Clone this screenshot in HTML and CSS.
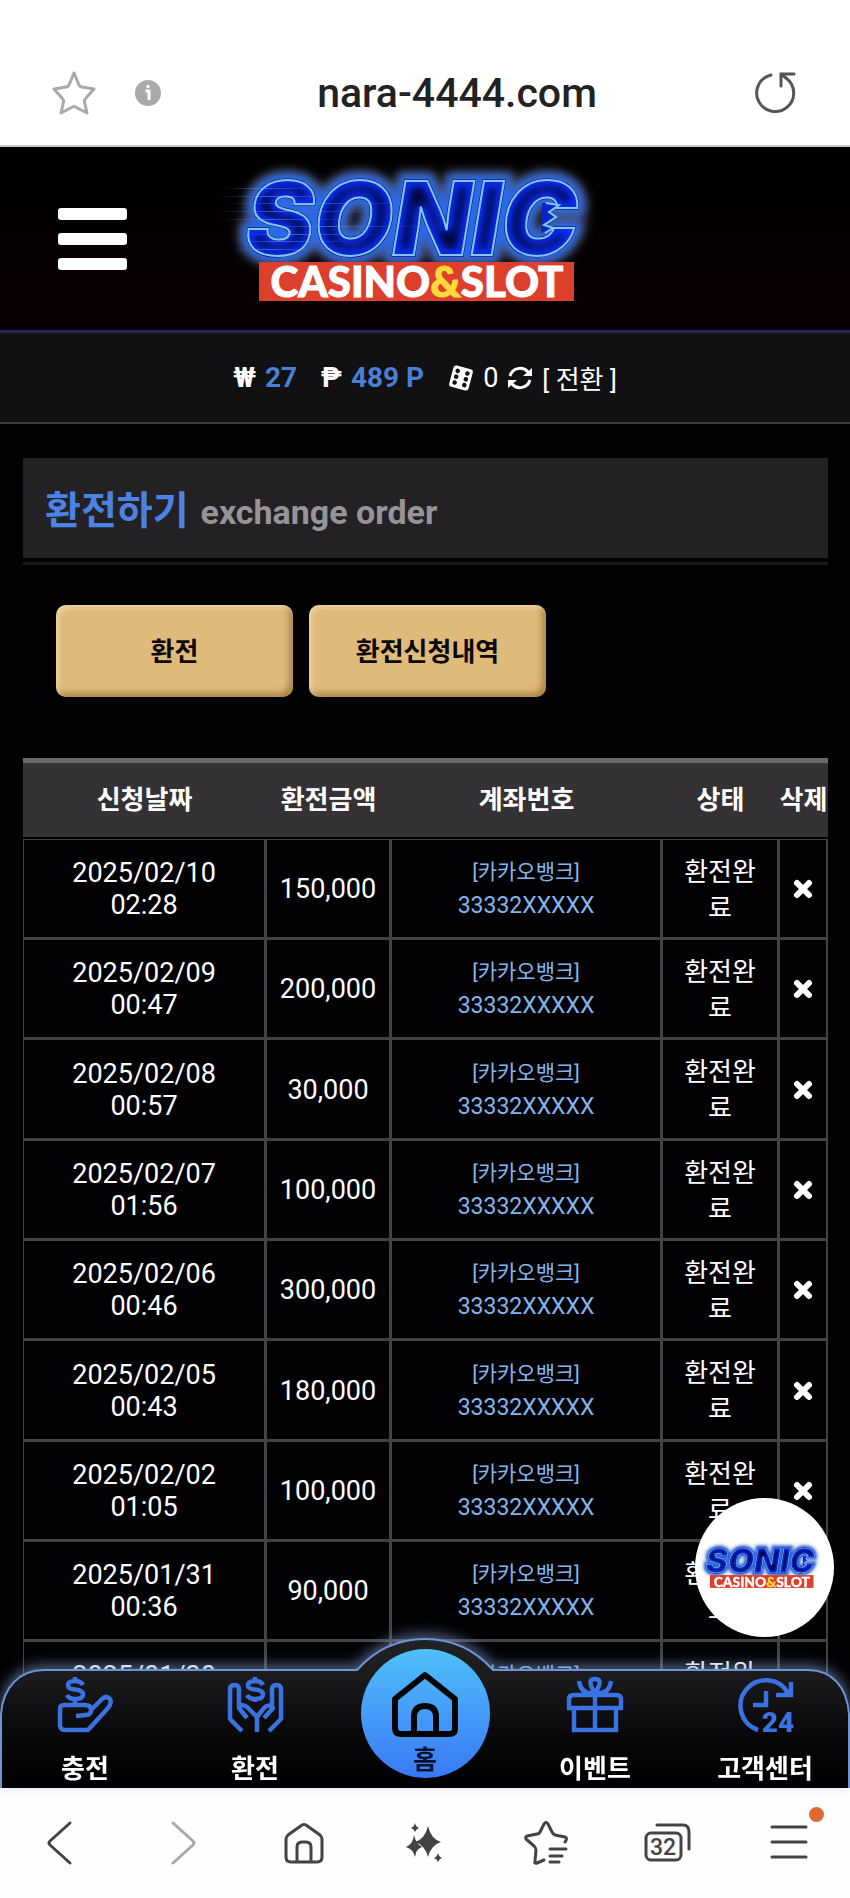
FILE: index.html
```html
<!DOCTYPE html>
<html lang="ko">
<head>
<meta charset="utf-8">
<meta name="viewport" content="width=device-width, initial-scale=1">
<title>환전하기</title>
<link rel="stylesheet" href="styles.css">
</head>
<body>

<!-- Shared logo -->
<svg class="defs" aria-hidden="true">
  <defs>
    <filter id="halo" x="-20%" y="-40%" width="140%" height="180%"><feGaussianBlur stdDeviation="6"/></filter>
    <filter id="soft" x="-20%" y="-40%" width="140%" height="180%"><feGaussianBlur stdDeviation="4"/></filter>
    <linearGradient id="speed" x1="0" x2="1"><stop offset="0" stop-color="#3560c8" stop-opacity="0"/><stop offset=".4" stop-color="#4c74d8" stop-opacity=".8"/><stop offset="1" stop-color="#3b62e0" stop-opacity=".1"/></linearGradient>
    <clipPath id="word-clip"><text x="46" y="96" class="logo-word">SONIC</text></clipPath>
    <symbol id="logo" viewBox="35 15 380 130" overflow="visible">
      <text x="46" y="96" class="logo-word logo-halo" filter="url(#halo)">SONIC</text>
      <text x="46" y="96" class="logo-word logo-rim" filter="url(#soft)">SONIC</text>
      <text x="46" y="96" class="logo-word logo-fill">SONIC</text>
      <g clip-path="url(#word-clip)"><text x="46" y="96" class="logo-word logo-inner" filter="url(#soft)">SONIC</text></g>
      <g fill="url(#speed)">
        <rect x="24" y="29" width="90" height="1"/><rect x="20" y="37" width="120" height="1"/><rect x="24" y="44" width="180" height="1"/>
        <rect x="18" y="52" width="150" height="1"/><rect x="22" y="60" width="120" height="1"/><rect x="60" y="67" width="160" height="1"/>
        <rect x="38" y="75" width="140" height="1"/><rect x="30" y="82" width="120" height="1"/><rect x="32" y="90" width="90" height="1"/>
      </g>
      <text x="46" y="96" class="logo-word logo-line">SONIC</text>
      <path d="M342 44 359 46 349 53 356 58 344 66 353 69 341 74Z" fill="#0a24c8"/>
      <path d="M346 44 359 46 349 53 356 58 344 66 353 69 345 74" fill="none" stroke="#7fc8ff" stroke-width="2"/>
      <rect x="59" y="103" width="315" height="39" fill="#dc3f2c"/>
      <text x="217" y="138" class="logo-sub">CASINO<tspan class="logo-amp">&amp;</tspan>SLOT</text>
    </symbol>
  </defs>
</svg>

<div class="address-bar">
  <div class="address-side">
    <button class="plain" aria-label="즐겨찾기"><svg width="44" height="44" viewBox="0 0 44 44" fill="none" stroke="#a9a9a9" stroke-width="3" stroke-linejoin="round"><path d="M22 2 27 14 Q28 16 30 16 L42 18 34 27 Q32 29 32.500 31 L35 42 23.500 36 Q22 35 20.500 36 L9 42 11.500 31 Q12 29 10 27 L2 18 14 16 Q16 16 17 14Z"/></svg></button>
    <button class="plain" aria-label="사이트 정보"><svg width="26" height="26" viewBox="0 0 26 26"><circle cx="13" cy="13" r="13" fill="#a9a9a9"/><path d="M10.500 11H14V20M13 5V8" fill="none" stroke="#fff" stroke-width="3"/></svg></button>
  </div>
  <div class="address">nara-4444.com</div>
  <button class="plain reload" aria-label="새로고침"><svg width="44" height="44" viewBox="0 0 44 44" fill="none" stroke="#555" stroke-width="3" stroke-linecap="round"><path d="M17 4A18.500 18.500 0 1 0 32 7"/><path d="M40 3H27V15M27 3 32 7"/></svg></button>
</div>

<header class="site-header">
  <button class="plain burger" aria-label="메뉴"><span></span><span></span><span></span></button>
  <a class="brand" href="#" aria-label="SONIC CASINO&amp;SLOT"><svg width="380" height="130"><use href="#logo"/></svg></a>
</header>

<div class="balance">
  <span class="pair"><span class="sign">₩</span><b>27</b></span>
  <span class="pair"><span class="sign">₱</span><b>489 P</b></span>
  <span class="pair">
    <svg width="26" height="26" viewBox="0 0 26 26"><g transform="rotate(15 13 13)"><rect x="3" y="2" width="20" height="22" rx="3" fill="#fff"/><g fill="#111013"><circle cx="8" cy="7" r="2.300"/><circle cx="8" cy="13" r="2.300"/><circle cx="8" cy="19" r="2.300"/><circle cx="18" cy="7" r="2.300"/><circle cx="18" cy="13" r="2.300"/><circle cx="18" cy="19" r="2.300"/></g></g></svg>
    <span>0</span>
    <svg width="26" height="26" viewBox="0 0 26 26" fill="none" stroke="#fff" stroke-width="3"><path d="M3 11A10.500 10.500 0 0 1 21 7M23 15A10.500 10.500 0 0 1 5 19"/><path d="M25 3V11H16ZM1 23V15H10Z" fill="#fff" stroke="none"/></svg>
    <a class="convert" href="#">[ 전환 ]</a>
  </span>
</div>

<main class="content">
  <h1 class="title">환전하기 <small>exchange order</small></h1>
  <div class="actions">
    <button class="gold">환전</button>
    <button class="gold">환전신청내역</button>
  </div>

  <table class="orders">
    <colgroup><col class="c-date"><col class="c-amount"><col class="c-account"><col class="c-state"><col class="c-delete"></colgroup>
    <thead>
      <tr><th>신청날짜</th><th>환전금액</th><th>계좌번호</th><th>상태</th><th>삭제</th></tr>
    </thead>
    <tbody>
      <tr><td>2025/02/10<br>02:28</td><td>150,000</td><td class="account"><span>[카카오뱅크]</span>33332XXXXX</td><td class="state">환전완료</td><td><button class="plain" aria-label="삭제"><svg class="x" viewBox="0 0 20 20"><path d="M4 4 16 16M16 4 4 16"/></svg></button></td></tr>
      <tr><td>2025/02/09<br>00:47</td><td>200,000</td><td class="account"><span>[카카오뱅크]</span>33332XXXXX</td><td class="state">환전완료</td><td><button class="plain" aria-label="삭제"><svg class="x" viewBox="0 0 20 20"><path d="M4 4 16 16M16 4 4 16"/></svg></button></td></tr>
      <tr><td>2025/02/08<br>00:57</td><td>30,000</td><td class="account"><span>[카카오뱅크]</span>33332XXXXX</td><td class="state">환전완료</td><td><button class="plain" aria-label="삭제"><svg class="x" viewBox="0 0 20 20"><path d="M4 4 16 16M16 4 4 16"/></svg></button></td></tr>
      <tr><td>2025/02/07<br>01:56</td><td>100,000</td><td class="account"><span>[카카오뱅크]</span>33332XXXXX</td><td class="state">환전완료</td><td><button class="plain" aria-label="삭제"><svg class="x" viewBox="0 0 20 20"><path d="M4 4 16 16M16 4 4 16"/></svg></button></td></tr>
      <tr><td>2025/02/06<br>00:46</td><td>300,000</td><td class="account"><span>[카카오뱅크]</span>33332XXXXX</td><td class="state">환전완료</td><td><button class="plain" aria-label="삭제"><svg class="x" viewBox="0 0 20 20"><path d="M4 4 16 16M16 4 4 16"/></svg></button></td></tr>
      <tr><td>2025/02/05<br>00:43</td><td>180,000</td><td class="account"><span>[카카오뱅크]</span>33332XXXXX</td><td class="state">환전완료</td><td><button class="plain" aria-label="삭제"><svg class="x" viewBox="0 0 20 20"><path d="M4 4 16 16M16 4 4 16"/></svg></button></td></tr>
      <tr><td>2025/02/02<br>01:05</td><td>100,000</td><td class="account"><span>[카카오뱅크]</span>33332XXXXX</td><td class="state">환전완료</td><td><button class="plain" aria-label="삭제"><svg class="x" viewBox="0 0 20 20"><path d="M4 4 16 16M16 4 4 16"/></svg></button></td></tr>
      <tr><td>2025/01/31<br>00:36</td><td>90,000</td><td class="account"><span>[카카오뱅크]</span>33332XXXXX</td><td class="state">환전완료</td><td></td></tr>
      <tr><td>2025/01/30<br>&nbsp;</td><td></td><td class="account"><span>[카카오뱅크]</span>&nbsp;</td><td class="state">환전완료</td><td></td></tr>
    </tbody>
  </table>
</main>

<a class="floating" href="#" aria-label="SONIC"><svg width="125" height="43"><use href="#logo"/></svg></a>

<footer class="dock">
  <nav class="site-nav">
    <svg class="nav-shape" viewBox="0 0 850 149" preserveAspectRatio="none" aria-hidden="true">
      <defs><linearGradient id="nav-bg" x1="0" y1="0" x2="0" y2="1"><stop offset="0" stop-color="#222326"/><stop offset=".25" stop-color="#1b1b1d"/><stop offset=".6" stop-color="#0a090c"/><stop offset="1" stop-color="#000"/></linearGradient></defs>
      <path d="M1 150V76C3 49 20 32 44 32H357C374 13 395 1 425 1S476 13 493 32H808C832 32 847 49 849 76V150" fill="url(#nav-bg)" stroke="#6d93d8" stroke-width="2"/>
    </svg>
    <a class="nav-item" href="#">
      <svg width="56" height="56" viewBox="0 0 56 56" fill="none" stroke="#3a72e2" stroke-width="4.500" stroke-linejoin="round"><path d="M18 23V28M32 53H8Q3 53 3 48V32Q3 28 7 28H28Q34 28 34 33Q34 38 29 38L19 39M33 34 45 22Q49 18 53 22Q55 26 51 31L31 53"/><path d="M26 8Q24 4 18 4Q11 4 11 8.500Q11 12 18 12.500Q26 13 26 17.500Q26 22 18 22Q12 22 10 18M18 0V4"/></svg>
      <span>충전</span>
    </a>
    <a class="nav-item" href="#">
      <svg width="56" height="56" viewBox="0 0 56 56" fill="none" stroke="#3a72e2" stroke-width="4.500" stroke-linejoin="round"><path d="M15 54 3 42V13Q3 8 7.500 8T12 13V31L20 41M12 31Q14 26 20 30L30 40V55M30 40 37 31Q42 26 46 31L37 41M45 31V13Q45 8 49.500 8T54 13V42L42 54"/><path d="M36 8Q34 4 28 4Q21 4 21 8.500Q21 12 28 12.500Q36 13 36 17.500Q36 22 28 22Q22 22 20 18M28 0V4M28 22V25"/></svg>
      <span>환전</span>
    </a>
    <a class="nav-item home" href="#">
      <svg width="66" height="66" viewBox="0 0 66 66" fill="none" stroke="#050505" stroke-width="6" stroke-linejoin="round"><path d="M3 27 33 3 63 27V57Q63 62 57 62H9Q3 62 3 56ZM22 62V45Q22 34 33 34T44 45V62"/></svg>
      <span>홈</span>
    </a>
    <a class="nav-item" href="#">
      <svg width="56" height="56" viewBox="0 0 56 56" fill="none" stroke="#3a72e2" stroke-width="4.500"><path d="M2 32V22Q2 18 7 18H49Q54 18 54 22V32M0 31H56M7 32V53H49V32M28 18V53M28 16C20 4 24 2 28 2S36 4 28 16M28 16Q14 18 12 4M28 16Q42 18 44 4"/></svg>
      <span>이벤트</span>
    </a>
    <a class="nav-item" href="#">
      <svg width="56" height="56" viewBox="0 0 56 56" fill="none" stroke="#3a72e2" stroke-width="4.500"><path d="M21 53A25.500 25.500 0 1 1 51 16M54 5V18H39M29 14V28H16"/><text x="41" y="55" class="hours">24</text></svg>
      <span>고객센터</span>
    </a>
  </nav>

  <div class="toolbar">
    <button class="plain" aria-label="뒤로"><svg width="44" height="44" viewBox="0 0 44 44"><path d="M31 2 11 20Q9 22 11 24L31 42"/></svg></button>
    <button class="plain faded" aria-label="앞으로"><svg width="44" height="44" viewBox="0 0 44 44"><path d="M13 2 33 20Q35 22 33 24L13 42"/></svg></button>
    <button class="plain" aria-label="홈"><svg width="44" height="44" viewBox="0 0 44 44"><path d="M4 18Q4 16 6 14L20 4Q22 3 24 4L38 14Q40 16 40 18V36Q40 41 35 41H9Q4 41 4 36ZM15 41V26Q15 21 20 21H24Q29 21 29 26V41"/></svg></button>
    <button class="plain" aria-label="AI"><svg width="44" height="44" viewBox="0 0 44 44"><path class="solid" d="M25 5Q28 18 38 21Q28 24 25 36Q22 24 12 21Q22 18 25 5ZM11 14Q13 23 19 26Q13 28 12 36Q10 28 3 26Q10 23 11 14ZM12 2Q13 6 16 7Q13 8 12 11Q11 8 8 7Q11 6 12 2ZM35 32Q36 36 39 37Q36 38 35 41Q34 38 31 37Q34 36 35 32Z"/></svg></button>
    <button class="plain" aria-label="북마크"><svg width="44" height="44" viewBox="0 0 44 44"><path d="M20 39 13 42Q10 43 11 40L12 29Q12 27 10 25L2 18Q1 16 3 15L13 13Q15 13 16 11L20 3Q22 0 24 3L28 11Q29 13 31 14L41 16Q44 17 41 21M26 28H42M26 35H38M26 41H35"/></svg></button>
    <button class="plain" aria-label="탭 32개"><svg width="50" height="44" viewBox="0 0 50 44"><rect x="3" y="12" width="35" height="27" rx="5"/><path d="M14 4H40Q46 4 46 11V28"/><text x="20" y="34" class="tab-count">32</text></svg></button>
    <button class="plain menu" aria-label="메뉴 더보기"><svg width="44" height="44" viewBox="0 0 44 44"><path d="M5 6H39M5 21H39M5 36H39"/></svg><i class="dot"></i></button>
  </div>
</footer>
</body>
</html>
```

FILE: styles.css
```css
* { box-sizing: border-box; }

body {
  margin: 0;
  min-height: 100vh;
  background: #020104;
  color: #fff;
  font-family: Roboto, "Noto Sans CJK KR", sans-serif;
  font-size: 27px;
}

a { color: inherit; text-decoration: none; }
svg { display: block; overflow: visible; }
.defs { position: absolute; width: 0; height: 0; }

.plain {
  padding: 0;
  border: 0;
  background: none;
  color: inherit;
  font: inherit;
}

/* Logo */
.logo-word { font: italic 900 102px Inter, sans-serif; }
.logo-halo { fill: #7f8fb8; stroke: #8490b0; stroke-width: 18px; opacity: .6; }
.logo-rim { fill: #2a68e8; stroke: #2a68e8; stroke-width: 13px; }
.logo-fill { fill: #02063c; stroke: #02063c; stroke-width: 3px; }
.logo-inner { fill: none; stroke: #0b2ffa; stroke-width: 12px; }
.logo-line { fill: none; stroke: #7fc8ff; stroke-width: 2px; }
.logo-sub { font: 900 42px Lato, sans-serif; fill: #fff; stroke: #fff; stroke-width: 1px; text-anchor: middle; }
.logo-amp { fill: #ffd83a; stroke: #ffd83a; }

/* Browser address bar */
.address-bar {
  display: grid;
  grid-template-columns: 1fr auto 1fr;
  align-items: center;
  height: 147px;
  padding: 40px 52px 0;
  background: #fff;
  border-bottom: 2px solid #c9c9c9;
}
.address-side { display: flex; align-items: center; gap: 39px; }
.address {
  margin-left: 64px;
  color: #222;
  font-size: 41px;
  font-weight: 500;
}
.reload { justify-self: end; }

/* Site header */
.site-header {
  display: grid;
  grid-template-columns: 1fr auto 1fr;
  align-items: center;
  height: 186px;
  padding: 0 58px;
  background: linear-gradient(#000, #0a0004);
  border-bottom: 3px solid #24265c;
}
.burger { display: grid; gap: 13px; width: 69px; }
.burger span { height: 12px; border-radius: 3px; background: #fff; }

.balance {
  display: flex;
  justify-content: center;
  align-items: center;
  gap: 24px;
  height: 91px;
  background: #111013;
  border-bottom: 2px solid #3c3c3e;
}
.pair { display: flex; align-items: center; gap: 9px; }
.pair b { color: #4a7fd6; font-size: 28px; font-weight: 700; }
.sign { font-size: 28px; font-weight: 700; }
.convert { font-size: 26px; }

/* Content */
.content { padding: 34px 22px 0 23px; }
.title {
  position: relative;
  display: flex;
  align-items: baseline;
  gap: 12px;
  height: 100px;
  margin: 0;
  padding: 3px 22px 0;
  background: #232124;
  color: #4a83e4;
  font-size: 39px;
  line-height: 100px;
}
.title::after {
  content: "";
  position: absolute;
  inset: auto 0 -7px;
  height: 3px;
  background: #1a181b;
}
.title small { color: #969496; font-size: 34px; }

.actions { display: flex; gap: 16px; padding: 47px 33px 61px; }
.gold {
  width: 237px;
  height: 92px;
  padding: 0 0 4px;
  border: 0;
  border-radius: 10px;
  background: #dfba7a;
  box-shadow: inset 3px 3px 5px rgba(255, 235, 200, .5), inset -4px -4px 6px rgba(130, 90, 30, .55);
  color: #0c0806;
  font: 700 26px Roboto, "Noto Sans CJK KR", sans-serif;
}

.orders {
  width: 100%;
  table-layout: fixed;
  border-spacing: 0;
  text-align: center;
  line-height: 32px;
}
.c-date { width: 30.2%; }
.c-amount { width: 15.5%; }
.c-account { width: 33.7%; }
.c-state { width: 14.5%; }
.c-delete { width: 6.1%; }
.orders th {
  height: 81px;
  padding: 0;
  background: #353236;
  border-top: 5px solid #6a686b;
  border-bottom: 2px solid #020104;
  font-size: 26px;
  white-space: nowrap;
}
.orders td {
  height: 100px;
  padding: 1px 0 0;
  border: solid #454246;
  border-width: 1px 2px 2px 1px;
}
.orders tr:nth-child(3n) td { height: 101px; }
.orders .account { color: #84b6ec; font-size: 23px; line-height: 34px; }
.account span { display: block; font-size: 21px; }
.orders .state { padding: 2px 20px 0; font-size: 26px; line-height: 36px; word-break: break-all; }
.orders .plain { display: block; margin: 0 auto; }
.x { width: 20px; height: 20px; fill: none; stroke: #fff; stroke-width: 6; stroke-linecap: round; }

/* Floating logo */
.floating {
  position: fixed;
  right: 16px;
  bottom: 261px;
  display: flex;
  align-items: center;
  justify-content: center;
  width: 139px;
  height: 139px;
  border-radius: 50%;
  background: #fff;
}

/* Bottom dock */
.dock { position: fixed; left: 0; right: 0; bottom: 0; }
.site-nav {
  position: relative;
  display: grid;
  grid-template-columns: repeat(5, 1fr);
  align-items: end;
  height: 149px;
}
.nav-shape {
  position: absolute;
  inset: 0;
  width: 100%;
  height: 100%;
  filter: drop-shadow(0 -4px 7px rgba(130, 160, 210, .6));
}
.nav-item {
  position: relative;
  display: flex;
  flex-direction: column;
  align-items: center;
  gap: 18px;
  font-size: 26px;
  font-weight: 700;
  line-height: 36px;
}
.home {
  justify-self: center;
  gap: 6px;
  width: 129px;
  height: 129px;
  margin-bottom: 9px;
  padding-top: 23px;
  border-radius: 50%;
  background: linear-gradient(#4fc0fa, #3a78f6);
  color: #04122e;
  font-size: 26px;
  line-height: 32px;
}
.hours { font: 900 28px Roboto, sans-serif; fill: #3a72e2; stroke: none; text-anchor: middle; }

.toolbar {
  display: grid;
  grid-template-columns: repeat(7, 1fr);
  place-items: center;
  height: 111px;
  background: #fefefe;
  border-top: 1px solid #999;
}
.toolbar svg { fill: none; stroke: #434345; stroke-width: 3; stroke-linecap: round; stroke-linejoin: round; }
.toolbar .faded svg { stroke: #a8a8a8; }
.toolbar .solid { fill: #434345; stroke: none; }
.toolbar .tab-count { font: 500 23px Roboto, sans-serif; fill: #434345; stroke: none; text-anchor: middle; }
.menu { position: relative; }
.dot {
  position: absolute;
  top: -14px;
  right: -13px;
  width: 15px;
  height: 15px;
  border-radius: 50%;
  background: #df6835;
}
```
